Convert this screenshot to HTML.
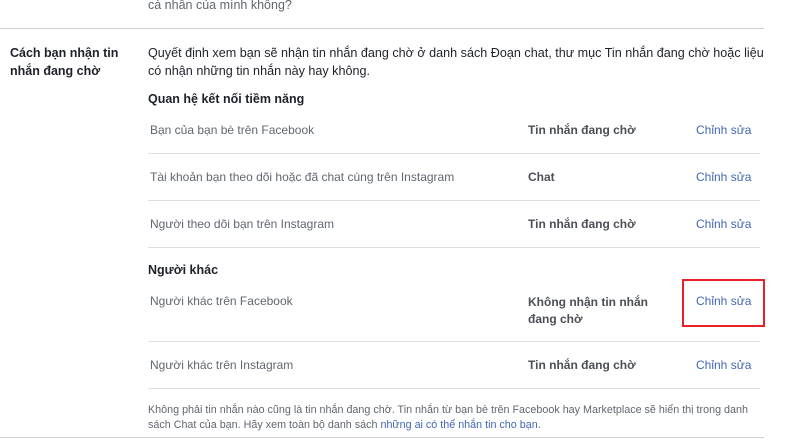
<!DOCTYPE html>
<html><head><meta charset="utf-8"><style>
body{margin:0;width:790px;height:443px;background:#fff;font-family:"Liberation Sans",Arial,sans-serif;font-size:12px;position:relative;overflow:hidden}
.a{position:absolute;white-space:nowrap}
.g{color:#606770}
.b{font-weight:bold;color:#1d2129}
.l{color:#4267b2}
.hr{position:absolute;height:1px;background:#dddfe2}
</style></head><body>
<div class="a g" style="left:148px;top:-2px;font-size:12.5px">cá nhân của mình không?</div>
<div class="hr" style="left:0;top:28px;width:764px;background:#ccd0d5"></div>
<div class="a b" style="left:10px;top:44px;line-height:18px;font-size:12.5px">Cách bạn nhận tin<br>nhắn đang chờ</div>
<div class="a" style="left:148px;top:44px;line-height:18px;font-size:12.6px;color:#1d2129">Quyết định xem bạn sẽ nhận tin nhắn đang chờ ở danh sách Đoạn chat, thư mục Tin nhắn đang chờ hoặc liệu<br>có nhận những tin nhắn này hay không.</div>
<div class="a b" style="left:148px;top:92px;font-size:12.5px">Quan hệ kết nối tiềm năng</div>

<div class="a g" style="left:150px;top:123px">Bạn của bạn bè trên Facebook</div>
<div class="a b" style="left:528px;top:123px;color:#4b4f56">Tin nhắn đang chờ</div>
<div class="a l" style="left:696px;top:123px">Chỉnh sửa</div>
<div class="hr" style="left:148px;top:153px;width:612px"></div>

<div class="a g" style="left:150px;top:170px">Tài khoản bạn theo dõi hoặc đã chat cùng trên Instagram</div>
<div class="a b" style="left:528px;top:170px;color:#4b4f56">Chat</div>
<div class="a l" style="left:696px;top:170px">Chỉnh sửa</div>
<div class="hr" style="left:148px;top:200px;width:612px"></div>

<div class="a g" style="left:150px;top:217px">Người theo dõi bạn trên Instagram</div>
<div class="a b" style="left:528px;top:217px;color:#4b4f56">Tin nhắn đang chờ</div>
<div class="a l" style="left:696px;top:217px">Chỉnh sửa</div>
<div class="hr" style="left:148px;top:247px;width:612px"></div>

<div class="a b" style="left:148px;top:263px;font-size:12.5px">Người khác</div>
<div class="a g" style="left:150px;top:294px">Người khác trên Facebook</div>
<div class="a b" style="left:528px;top:294px;line-height:17px;color:#4b4f56">Không nhận tin nhắn<br>đang chờ</div>
<div class="a l" style="left:696px;top:294px">Chỉnh sửa</div>
<div style="position:absolute;left:682px;top:279px;width:79px;height:44px;border:2px solid #e8202a"></div>
<div class="hr" style="left:148px;top:341px;width:612px"></div>

<div class="a g" style="left:150px;top:358px">Người khác trên Instagram</div>
<div class="a b" style="left:528px;top:358px;color:#4b4f56">Tin nhắn đang chờ</div>
<div class="a l" style="left:696px;top:358px">Chỉnh sửa</div>
<div class="hr" style="left:148px;top:388px;width:612px"></div>

<div class="a g" style="left:148px;top:403px;font-size:10.75px;line-height:15px">Không phải tin nhắn nào cũng là tin nhắn đang chờ. Tin nhắn từ bạn bè trên Facebook hay Marketplace sẽ hiển thị trong danh<br>sách Chat của bạn. Hãy xem toàn bộ danh sách <span class="l">những ai có thể nhắn tin cho bạn.</span></div>
<div class="hr" style="left:0;top:437px;width:764px;background:#ccd0d5"></div>
</body></html>
